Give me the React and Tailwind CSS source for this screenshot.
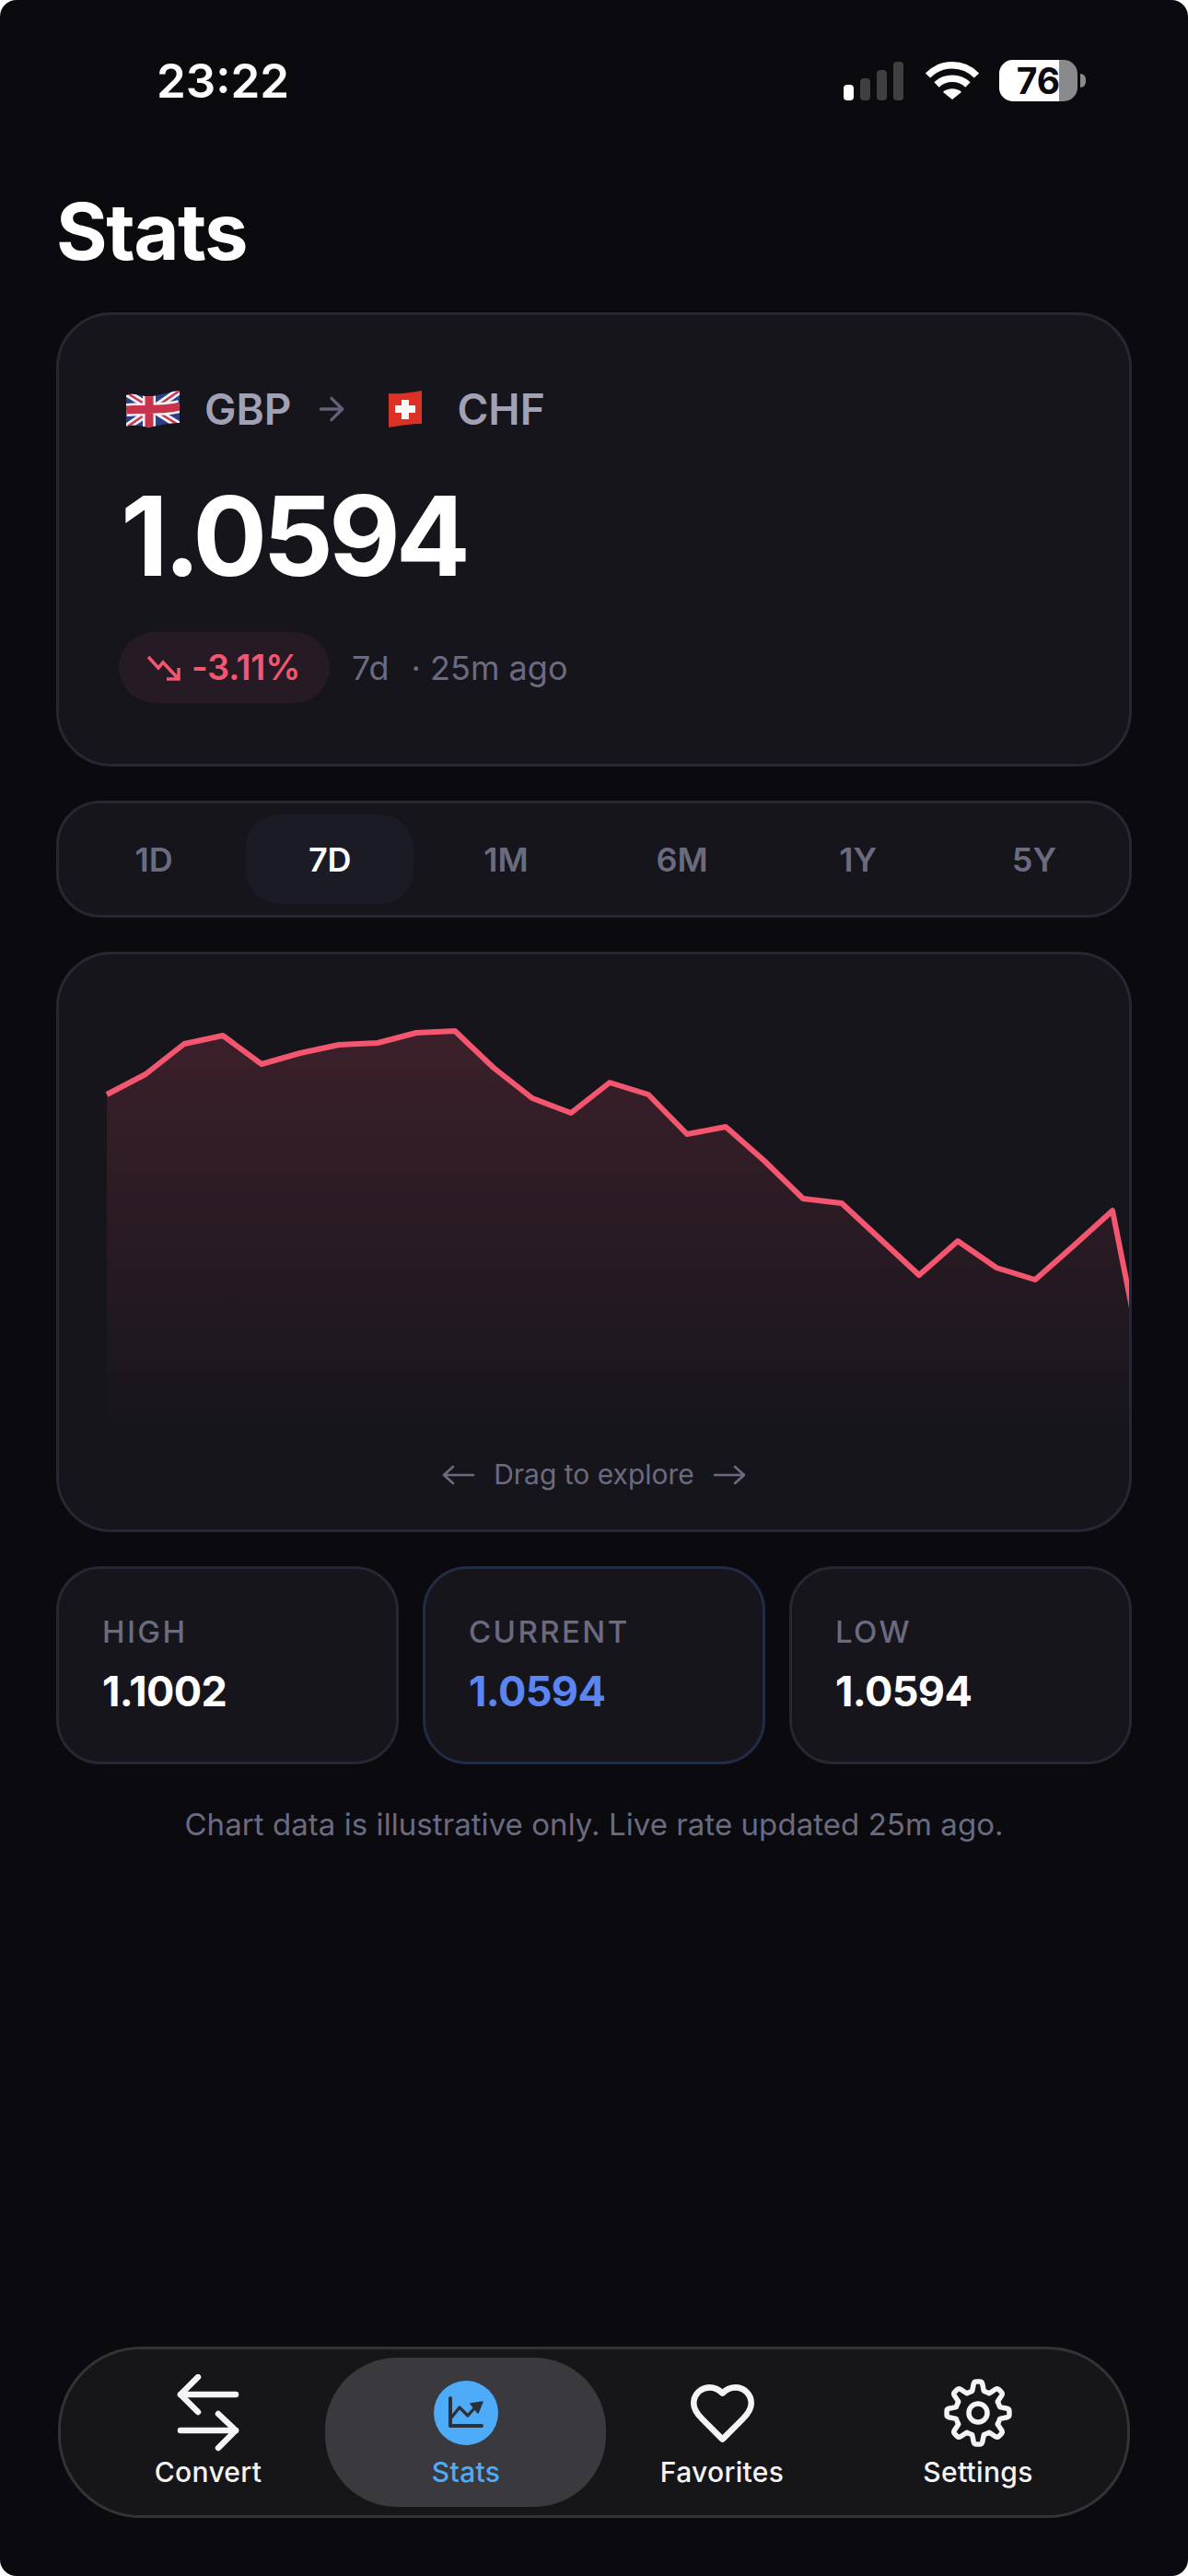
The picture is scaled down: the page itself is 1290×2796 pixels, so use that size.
import { ArrowRight } from "lucide-react";

const tabs = ["1D", "7D", "1M", "6M", "1Y", "5Y"];

const chartY = [1188, 1166, 1133, 1124, 1155, 1143, 1134, 1132, 1121, 1119, 1159, 1192, 1208, 1175, 1188, 1231, 1223, 1260, 1301, 1306, 1345, 1384, 1347, 1376, 1389, 1352, 1314, 1525];
// points are in card space: the card's inner box starts at x 64, y 1036
const linePts = chartY.map((y, i) => `${52 + 42 * i},${y - 1036}`).join(" ");
const areaPts = `52,${1188 - 1036} ${linePts} 1186,560 52,560`;

// 8 toothed gear, same outline as the reference's settings icon
function gearPath() {
  const c = 37;
  const pt = (r, deg) => {
    const a = (deg * Math.PI) / 180;
    return `${(c + r * Math.sin(a)).toFixed(2)} ${(c - r * Math.cos(a)).toFixed(2)}`;
  };
  let d = "";
  for (let i = 0; i < 8; i++) {
    const a = i * 45;
    d += `${i === 0 ? "M" : "L"}${pt(24.5, a - 15)} L${pt(32, a - 8.5)} Q${pt(34.2, a - 7)} ${pt(34, a - 3)} L${pt(34, a + 3)} Q${pt(34.2, a + 7)} ${pt(32, a + 8.5)} L${pt(24.5, a + 15)} A24.5 24.5 0 0 1 ${pt(24.5, a + 30)} `;
  }
  return d + "Z";
}

function UkFlag() {
  return (
    <svg width="58" height="40" viewBox="0 0 58 40">
      <defs>
        <clipPath id="ukWave">
          <path d="M0 5 C10 1 18 8 29 6 C40 4 48 1 58 0 L58 35 C48 35 40 37 29 39 C18 41 10 35 0 39 Z" />
        </clipPath>
      </defs>
      <g clipPath="url(#ukWave)">
        <rect width="58" height="42" fill="#2b3f87" />
        <path d="M0 2 L58 38 M58 0 L0 40" stroke="#f3f3f5" strokeWidth="8" />
        <path d="M0 2 L58 38 M58 0 L0 40" stroke="#c8344b" strokeWidth="2.5" />
        <path d="M25 0 V42 M0 21 C18 19 40 22 58 17" stroke="#f3f3f5" strokeWidth="14" fill="none" />
        <path d="M25 0 V42 M0 21 C18 19 40 22 58 17" stroke="#c8344b" strokeWidth="9" fill="none" />
      </g>
    </svg>
  );
}

function ChFlag() {
  return (
    <svg width="36" height="40" viewBox="0 0 36 40">
      <path d="M0 3 C12 4 24 2 36 0 L36 36 C24 36 12 38 0 40 Z" fill="#dc3226" />
      <path d="M14 10 H22 V16 H29 V24 H22 V31 H14 V24 H7 V16 H14 Z" fill="#f7f7f7" />
    </svg>
  );
}

function SwapIcon() {
  return (
    <svg width="72" height="84" viewBox="0 0 72 84" fill="none" stroke="#f4f4f6" strokeWidth="6.5" strokeLinecap="round" strokeLinejoin="round">
      <path d="M6 22 H66" />
      <path d="M25 3 L6 22 L25 41" />
      <path d="M6 61 H66" />
      <path d="M47 43 L66 61 L47 80" />
    </svg>
  );
}

function StatsIcon() {
  return (
    <svg width="70" height="70" viewBox="0 0 70 70" fill="none" stroke="#2e3038" strokeLinecap="round" strokeLinejoin="round">
      <path d="M18 19 V49 H52" strokeWidth="4" />
      <path d="M20 39 L28 29 L37 38 L45 29" strokeWidth="3.2" />
      <path d="M40 25 L53 23 L48 35 Z" fill="#2e3038" strokeWidth="1.5" />
    </svg>
  );
}

function HeartIcon() {
  return (
    <svg width="75" height="75" viewBox="0 0 24 24" fill="none" stroke="#f4f4f6" strokeWidth="2.1" strokeLinecap="round" strokeLinejoin="round">
      <path d="M19 14c1.49-1.46 3-3.21 3-5.5A5.5 5.5 0 0 0 16.5 3c-1.76 0-3 .5-4.5 2-1.5-1.5-2.74-2-4.5-2A5.5 5.5 0 0 0 2 8.5c0 2.3 1.5 4.05 3 5.5l7 7Z" />
    </svg>
  );
}

function GearIcon() {
  return (
    <svg width="74" height="74" viewBox="0 0 74 74" fill="none" stroke="#f4f4f6" strokeWidth="5.5" strokeLinejoin="round">
      <path d={gearPath()} />
      <circle cx="37" cy="37" r="10" />
    </svg>
  );
}

function NavItem({ label, active, width, children }) {
  return (
    <div className={`relative ${width} flex flex-col items-center pt-[27px]`}>
      <div className="h-[84px] flex items-center justify-center">{children}</div>
      <div className={`text-[30px] leading-[40px] font-medium tracking-[0.3px] mt-[2px] ${active ? "text-[#4dabf7]" : "text-[#f4f4f6]"}`}>{label}</div>
    </div>
  );
}

function StatCard({ label, value, blue }) {
  return (
    <div className={`bg-[#16151c] border-[3px] rounded-[48px] h-[215px] pl-[47px] pt-[46px] ${blue ? "border-[#222c45]" : "border-[#272733]"}`}>
      <div className="text-[33px] leading-[44px] font-medium tracking-[2.4px] text-[#6b6b80]">{label}</div>
      <div className={`text-[45px] leading-[60px] font-bold tracking-[-0.6px] mt-[13px] ${blue ? "text-[#5b86f2]" : "text-white"}`}>{value}</div>
    </div>
  );
}

export default function App() {
  return (
    <div className="w-[1290px] h-[2796px] bg-white">
      <div className="w-full h-full rounded-[18px] bg-[#0a0a0f] flex flex-col font-['Inter',sans-serif] text-white overflow-hidden">
        {/* Status bar */}
        <div className="h-[150px] shrink-0 flex items-start justify-between pl-[170px] pr-[111px] pt-[57px]">
          <div className="text-[51px] leading-[62px] font-semibold">23:22</div>
          <div className="flex items-center gap-[22px] pt-[8px]">
            <svg width="66" height="42" viewBox="0 0 66 42">
              <rect x="0" y="25" width="11" height="17" rx="4" fill="#fff" />
              <rect x="18" y="18" width="11" height="24" rx="4" fill="#3f3f42" />
              <rect x="36" y="9" width="11" height="33" rx="4" fill="#3f3f42" />
              <rect x="54" y="0" width="11" height="42" rx="4" fill="#3f3f42" />
            </svg>
            <svg width="60" height="42" viewBox="0 0 60 42" fill="none" stroke="#fff" strokeWidth="7.5">
              <path d="M3.5 15 C18 0 42 0 56.5 15" />
              <path d="M13 25 C22 16 38 16 47 25" />
              <path d="M30 41 L20 33 C25 28 35 28 40 33 Z" fill="#fff" stroke="none" />
            </svg>
            <div className="flex items-center -ml-[1px]">
              <div className="relative w-[85px] h-[45px] rounded-[15px] overflow-hidden bg-[#8a8a8c]">
                <div className="absolute left-0 top-0 h-full w-[65px] bg-white" />
                <div className="absolute inset-0 flex items-center justify-center text-[39px] font-bold text-[#0a0a0f] leading-none">76</div>
              </div>
              <div className="w-[6px] h-[15px] rounded-r-[6px] bg-[#8a8a8c] ml-[3px]" />
            </div>
          </div>
        </div>

        <div className="px-[61px] flex flex-col">
          <h1 className="text-[85px] leading-[100px] font-bold tracking-[-1.5px] mt-[52px] mb-[37px]">Stats</h1>

          {/* Rate card */}
          <div className="bg-[#16151c] border-[3px] border-[#272733] rounded-[60px] h-[493px] pl-[72px] pt-[75px]">
            <div className="flex items-center h-[54px]">
              <div className="ml-[1px]"><UkFlag /></div>
              <span className="text-[46px] font-semibold text-[#a1a1b5] ml-[27px]">GBP</span>
              <ArrowRight size={40} strokeWidth={2} className="text-[#62627a] ml-[24px]" />
              <div className="ml-[42px]"><ChFlag /></div>
              <span className="text-[46px] font-semibold text-[#a1a1b5] ml-[38px]">CHF</span>
            </div>
            <div className="text-[120px] leading-[140px] font-bold tracking-[-5px] mt-[41px] -ml-[5px]">1.0594</div>
            <div className="flex items-center mt-[34px] -ml-[7px]">
              <div className="h-[77px] w-[229px] rounded-full bg-[#261a24] flex items-center pl-[30px] text-[#f4566f]">
                <svg width="38" height="30" viewBox="0 0 38 30" fill="none" stroke="currentColor" strokeWidth="3.5">
                  <path d="M2 3 L13 15 L18 9 L34 26" />
                  <path d="M22 27 H35 V15" />
                </svg>
                <span className="text-[38px] font-semibold tracking-[-0.3px] ml-[11px]">-3.11%</span>
              </div>
              <span className="text-[36px] text-[#6b6b80] ml-[24px]">7d</span>
              <span className="text-[36px] text-[#6b6b80] ml-[24px]">· 25m ago</span>
            </div>
          </div>

          {/* Range tabs */}
          <div className="bg-[#16151c] border-[3px] border-[#272733] rounded-[48px] h-[127px] mt-[37px] p-[12px] flex gap-[9px]">
            {tabs.map((t) => (
              <div key={t} className={`flex-1 flex items-center justify-center rounded-[36px] text-[36px] font-semibold ${t === "7D" ? "bg-[#1a1b25] text-white" : "text-[#6b6b80]"}`}>
                {t}
              </div>
            ))}
          </div>

          {/* Chart */}
          <div className="bg-[#16151c] border-[3px] border-[#272733] rounded-[60px] h-[630px] mt-[37px] overflow-hidden flex flex-col">
            <svg width="1162" height="520" viewBox="0 0 1162 520" className="block shrink-0">
              <defs>
                <linearGradient id="areaFade" x1="0" y1="84" x2="0" y2="525" gradientUnits="userSpaceOnUse">
                  <stop offset="0" stopColor="#f4566f" stopOpacity="0.17" />
                  <stop offset="1" stopColor="#f4566f" stopOpacity="0" />
                </linearGradient>
              </defs>
              <polygon points={areaPts} fill="url(#areaFade)" />
              <polyline points={linePts} fill="none" stroke="#f4566f" strokeWidth="6" strokeLinejoin="round" />
            </svg>
            <div className="flex items-center justify-center gap-[20px] text-[#6b6b80] mt-[22px]">
              <svg width="36" height="24" viewBox="0 0 36 24" fill="none" stroke="currentColor" strokeWidth="2.6" strokeLinecap="round" strokeLinejoin="round">
                <path d="M2 12 H34 M12 3 L2 12 L12 21" />
              </svg>
              <span className="text-[30px]">Drag to explore</span>
              <svg width="36" height="24" viewBox="0 0 36 24" fill="none" stroke="currentColor" strokeWidth="2.6" strokeLinecap="round" strokeLinejoin="round">
                <path d="M2 12 H34 M24 3 L34 12 L24 21" />
              </svg>
            </div>
          </div>

          {/* High / current / low */}
          <div className="grid grid-cols-3 gap-[26px] mt-[37px]">
            <StatCard label="HIGH" value="1.1002" />
            <StatCard label="CURRENT" value="1.0594" blue />
            <StatCard label="LOW" value="1.0594" />
          </div>

          <p className="text-center text-[33px] leading-[44px] tracking-[0.06px] text-[#6b6b80] mt-[43px]">Chart data is illustrative only. Live rate updated 25m ago.</p>
        </div>

        {/* Bottom nav */}
        <div className="relative mt-auto mb-[63px] mx-[63px] h-[186px] rounded-[90px] bg-[#161618] border-[3px] border-[#333337] flex pl-[20px]">
          <div className="absolute left-[287px] top-[9px] w-[305px] h-[162px] rounded-[78px] bg-[#39393e]" />
          <NavItem label="Convert" width="w-[280px]"><SwapIcon /></NavItem>
          <NavItem label="Stats" active width="w-[280px]">
            <div className="w-[70px] h-[70px] rounded-full bg-[#4dabf7]"><StatsIcon /></div>
          </NavItem>
          <NavItem label="Favorites" width="w-[276px]"><HeartIcon /></NavItem>
          <NavItem label="Settings" width="w-[280px]"><GearIcon /></NavItem>
        </div>
      </div>
    </div>
  );
}
